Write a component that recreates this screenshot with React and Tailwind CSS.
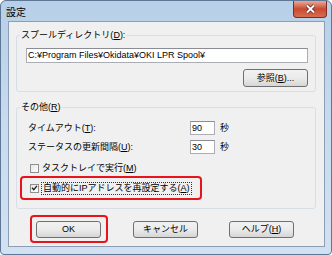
function Checkbox({ checked = false }) {
  return (
    <div className="w-[9px] h-[9px] border border-[#8e8f8f] bg-gradient-to-br from-[#e6e6e6] to-[#ffffff] flex items-center justify-center shrink-0">
      {checked && (
        <svg width="8" height="8" viewBox="0 0 8 8">
          <path d="M1.2 3.8 L3.2 5.9 L6.8 1.6" fill="none" stroke="#222" strokeWidth="1.6" />
        </svg>
      )}
    </div>
  );
}

function Button({ children, className = "" }) {
  return (
    <div
      className={`w-[65px] h-[17px] rounded-[3px] border border-[#707070] bg-gradient-to-b from-[#f2f2f2] via-[#ebebeb] to-[#d6d6d6] flex items-center justify-center text-[9px] leading-none ${className}`}
    >
      {children}
    </div>
  );
}

function TextBox({ value, className = "" }) {
  return (
    <div
      className={`h-[14px] border border-[#abadb3] border-t-[#8a8d94] bg-white flex items-center pl-[1px] text-[9px] leading-none ${className}`}
    >
      {value}
    </div>
  );
}

export default function App() {
  return (
    <div className="w-[332px] h-[255px] bg-white font-['Liberation_Sans','Noto_Sans_CJK_JP',sans-serif] text-black">
      <div className="w-[332px] h-[255px] rounded-t-[6px] rounded-b-[4px] border border-[#5d7794] bg-gradient-to-b from-[#b7cfe8] via-[#c8dbef] to-[#d2e1f1] flex flex-col">
        {/* title bar */}
        <div className="h-[20px] flex items-start justify-between">
          <span className="ml-[5px] mt-[6px] text-[10px] leading-[12px]">設定</span>
          <div className="mr-[4px] w-[34px] h-[17px] rounded-b-[4px] border border-t-0 border-[#7a2e24] bg-gradient-to-b from-[#e9a897] via-[#c9492f] to-[#d76c50] flex items-center justify-center">
            <svg width="11" height="10" viewBox="0 0 11 10">
              <path d="M2 1.5 L9 8.5 M9 1.5 L2 8.5" stroke="#5a2019" strokeWidth="3.4" />
              <path d="M2 1.5 L9 8.5 M9 1.5 L2 8.5" stroke="#ffffff" strokeWidth="2" />
            </svg>
          </div>
        </div>

        {/* client area */}
        <div className="ml-[7px] mr-[6px] h-[226px] border border-[#8a9fb6] bg-[#f0f0f0] flex flex-col">
          {/* spool directory */}
          <fieldset className="ml-[7px] mr-[8px] mt-[7px] border border-[#d5dfe5] rounded-[3px] px-[3px] pb-[4px]">
            <legend className="px-[1px] text-[9px] leading-[12px]">スプールディレクトリ(<u>D</u>):</legend>
            <div className="ml-[6px] mr-[4px] flex flex-col">
              <TextBox value="C:¥Program Files¥Okidata¥OKI LPR Spool¥" className="mt-[7px] h-[15px]" />
              <div className="flex justify-end mt-[6px]">
                <Button className="w-[62px] h-[18px]">
                  参照(<u>B</u>)...
                </Button>
              </div>
            </div>
          </fieldset>

          {/* others */}
          <fieldset className="ml-[7px] mr-[8px] mt-[9px] border border-[#d5dfe5] rounded-[3px] px-[3px] pb-[8px]">
            <legend className="px-[1px] text-[9px] leading-[12px]">その他(<u>R</u>)</legend>
            <div className="flex flex-col">
              <div className="mt-[8px] ml-[8px] flex items-center text-[9px] leading-none">
                <span className="w-[162px]">タイムアウト(<u>T</u>):</span>
                <TextBox value="90" className="w-[25px]" />
                <span className="ml-[5px]">秒</span>
              </div>
              <div className="mt-[5px] ml-[8px] flex items-center text-[9px] leading-none">
                <span className="w-[162px]">ステータスの更新間隔(<u>U</u>):</span>
                <TextBox value="30" className="w-[25px]" />
                <span className="ml-[5px]">秒</span>
              </div>
              <div className="mt-[7px] ml-[10px] h-[14px] flex items-center text-[9px] leading-none">
                <Checkbox />
                <span className="ml-[3px]">タスクトレイで実行(<u>M</u>)</span>
              </div>
              <div className="mt-[1px] w-[182px] h-[24px] border-2 border-[#e8141c] rounded-[4px] flex items-center pl-[8px] text-[9px] leading-none">
                <Checkbox checked />
                <span className="ml-[2px] px-[1px] py-[1px] border border-dotted border-[#333]">
                  自動的にIPアドレスを再設定する(<u>A</u>)
                </span>
              </div>
            </div>
          </fieldset>

          {/* buttons */}
          <div className="mt-[6px] ml-[21px] flex items-center">
            <div className="border-2 border-[#e8141c] rounded-[4px] pl-[4px] pr-[5px] pt-[4px] pb-[3px]">
              <Button>OK</Button>
            </div>
            <Button className="ml-[25px] mt-[1px]">キャンセル</Button>
            <Button className="ml-[31px] mt-[1px]">
              ヘルプ(<u>H</u>)
            </Button>
          </div>
        </div>
      </div>
    </div>
  );
}
